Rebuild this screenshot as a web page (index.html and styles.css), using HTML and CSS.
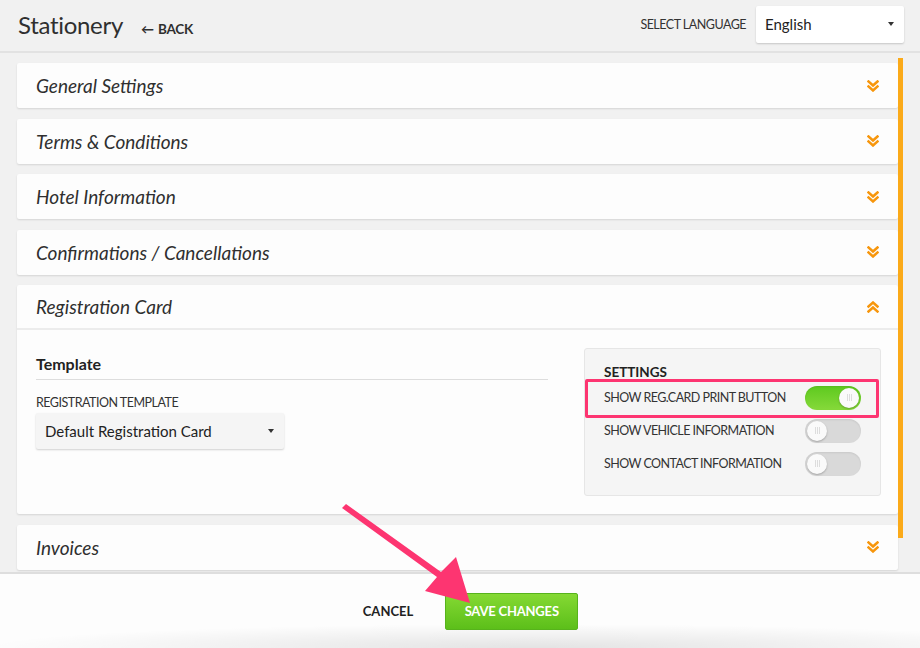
FILE: index.html
```html
<!DOCTYPE html>
<html>
<head>
<meta charset="utf-8">
<link rel="stylesheet" href="styles.css">
</head>
<body>
<div class="page">
  <header class="topbar">
    <div class="title-group">
      <h1 class="title">Stationery</h1>
      <a class="back"><span class="back-arrow">&#8592;</span> BACK</a>
    </div>
    <div class="lang">
      <span class="lang-label">SELECT LANGUAGE</span>
      <div class="select lang-select"><span>English</span><span class="caret"></span></div>
    </div>
  </header>

  <main class="content">
    <div class="panels">
      <section class="panel"><div class="panel-head"><span>General Settings</span><svg class="chev" viewBox="0 0 12 12"><path d="M1.5 1.5 L6 5.5 L10.5 1.5 M1.5 6.5 L6 10.5 L10.5 6.5"/></svg></div></section>
      <section class="panel"><div class="panel-head"><span>Terms &amp; Conditions</span><svg class="chev" viewBox="0 0 12 12"><path d="M1.5 1.5 L6 5.5 L10.5 1.5 M1.5 6.5 L6 10.5 L10.5 6.5"/></svg></div></section>
      <section class="panel"><div class="panel-head"><span>Hotel Information</span><svg class="chev" viewBox="0 0 12 12"><path d="M1.5 1.5 L6 5.5 L10.5 1.5 M1.5 6.5 L6 10.5 L10.5 6.5"/></svg></div></section>
      <section class="panel"><div class="panel-head"><span>Confirmations / Cancellations</span><svg class="chev" viewBox="0 0 12 12"><path d="M1.5 1.5 L6 5.5 L10.5 1.5 M1.5 6.5 L6 10.5 L10.5 6.5"/></svg></div></section>
      <section class="panel open">
        <div class="panel-head"><span>Registration Card</span><svg class="chev" viewBox="0 0 12 12"><path d="M1.5 5.5 L6 1.5 L10.5 5.5 M1.5 10.5 L6 6.5 L10.5 10.5"/></svg></div>
        <div class="panel-body">
          <div class="template-col">
            <h2 class="section-title">Template</h2>
            <label class="field-label">REGISTRATION TEMPLATE</label>
            <div class="select tpl-select"><span>Default Registration Card</span><span class="caret"></span></div>
          </div>
          <div class="settings-box">
            <h3 class="settings-title">SETTINGS</h3>
            <div class="setting-row highlighted">
              <span>SHOW REG.CARD PRINT BUTTON</span>
              <span class="toggle on"><span class="knob"><i></i></span></span>
            </div>
            <div class="setting-row">
              <span>SHOW VEHICLE INFORMATION</span>
              <span class="toggle"><span class="knob"><i></i></span></span>
            </div>
            <div class="setting-row">
              <span>SHOW CONTACT INFORMATION</span>
              <span class="toggle"><span class="knob"><i></i></span></span>
            </div>
          </div>
        </div>
      </section>
      <section class="panel"><div class="panel-head"><span>Invoices</span><svg class="chev" viewBox="0 0 12 12"><path d="M1.5 1.5 L6 5.5 L10.5 1.5 M1.5 6.5 L6 10.5 L10.5 6.5"/></svg></div></section>
    </div>
    <div class="scrollbar"></div>
  </main>

  <footer class="footer">
    <button class="btn-cancel">CANCEL</button>
    <button class="btn-save">SAVE CHANGES</button>
  </footer>

  <svg class="annot-arrow" viewBox="0 0 920 648" width="920" height="648">
    <path d="M342 508 L346 504 L441 572 L456 557 L470 603 L425 591 L437 577 Z" fill="#fd3571"/>
  </svg>
</div>
</body>
</html>
```
FILE: styles.css
```css
* { box-sizing: border-box; }
html, body { margin: 0; padding: 0; }
body {
  font-family: "Lato", "Open Sans", sans-serif;
  color: #333;
  background: #f1f1f1;
}
.page {
  position: relative;
  width: 920px;
  height: 648px;
  overflow: hidden;
  display: flex;
  flex-direction: column;
  background: #f1f1f1;
}
.topbar {
  height: 53px;
  flex: none;
  display: flex;
  align-items: center;
  justify-content: space-between;
  padding: 0 16px 2px 18px;
  border-bottom: 2px solid #e2e2e2;
}
.title-group { display: flex; align-items: baseline; gap: 18px; }
.title {
  margin: 0;
  font-size: 24px;
  font-weight: 400;
  color: #2f2f2f;
  letter-spacing: -0.3px;
}
.back {
  font-size: 13.5px;
  font-weight: 700;
  color: #2f2f2f;
  letter-spacing: -0.2px;
}
.back-arrow { font-size: 13px; margin-right: 1px; }
.lang { display: flex; align-items: center; gap: 10px; }
.lang-label { font-size: 12.5px; color: #333; letter-spacing: -0.5px; }
.select {
  display: flex;
  align-items: center;
  justify-content: space-between;
  background: #fff;
  box-shadow: 0 1px 2px rgba(0,0,0,0.18);
  border-radius: 2px;
  font-size: 15px;
  color: #222;
}
.lang-select { width: 148px; height: 37px; padding: 0 10px 2px 9px; }
.caret {
  width: 0; height: 0;
  border-left: 3px solid transparent;
  border-right: 3px solid transparent;
  border-top: 4px solid #333;
}
.content {
  flex: 1;
  display: flex;
  padding: 10px 16px 0 17px;
  min-height: 0;
  overflow: hidden;
}
.panels { width: 881px; display: flex; flex-direction: column; gap: 10.5px; }
.scrollbar {
  width: 5px;
  height: 480px;
  background: #fbaa19;
  margin-top: -5px;
}
.panel {
  background: #fdfdfd;
  box-shadow: 0 1px 2px rgba(0,0,0,0.12);
  border-radius: 2px;
}
.panel-head {
  height: 45px;
  display: flex;
  align-items: center;
  justify-content: space-between;
  padding: 0 19px 0 19px;
  font-size: 19px;
  font-style: italic;
  color: #2f2f2f;
}
.chev { width: 12px; height: 12px; fill: none; stroke: #f7960c; stroke-width: 2.5; stroke-linecap: square; }
.open .panel-head { border-bottom: 2px solid #ececec; }
.panel-body {
  display: flex;
  justify-content: space-between;
  padding: 18px 17px 17px 19px;
  height: 184px;
}
.template-col { width: 512px; }
.section-title {
  margin: 6px 0 0 0;
  font-size: 16px;
  font-weight: 700;
  color: #222;
  padding-bottom: 6px;
  border-bottom: 1px solid #ddd;
}
.field-label { display: block; margin-top: 15px; font-size: 12.5px; color: #333; letter-spacing: -0.5px; }
.tpl-select {
  width: 248px; height: 36px; margin-top: 3px;
  padding: 0 10px 0 9px;
  background: #f5f5f5;
  font-size: 15px;
}
.settings-box {
  width: 297px;
  height: 148px;
  background: #f5f5f5;
  border: 1px solid #e6e6e6;
  border-radius: 3px;
  padding: 15px 19px 0 19px;
}
.settings-title { margin: 0 0 1px 0; font-size: 13.5px; font-weight: 700; color: #222; }
.setting-row {
  position: relative;
  height: 33px;
  display: flex;
  align-items: center;
  justify-content: space-between;
  font-size: 12.5px;
  letter-spacing: -0.55px;
  color: #333;
}
.highlighted::after {
  content: "";
  position: absolute;
  left: -19px; right: -18px; top: -2px; bottom: -4px;
  border: 3px solid #fd3571;
  border-radius: 2px;
}
.toggle {
  width: 56px; height: 24px;
  border-radius: 12px;
  background: #d9d9d9;
  position: relative;
  box-shadow: inset 0 1px 2px rgba(0,0,0,0.08);
}
.toggle.on { background: linear-gradient(#5ec91f, #86d93a); }
.knob {
  position: absolute;
  top: 2px; left: 2px;
  width: 20px; height: 20px;
  border-radius: 50%;
  background: #fafafa;
  box-shadow: 0 1px 2px rgba(0,0,0,0.25);
  display: flex; align-items: center; justify-content: center;
}
.toggle.on .knob { left: 34px; }
.knob i {
  width: 5px; height: 7px;
  border-left: 1px solid #ddd; border-right: 1px solid #ddd;
  position: relative;
}
.knob i::after { content: ""; position: absolute; left: 1px; top: 0; width: 1px; height: 7px; background: #ddd; }
.footer {
  flex: none;
  height: 76px;
  background:
    radial-gradient(ellipse 60% 24px at 58% 100%, rgba(0,0,0,0.10), rgba(0,0,0,0) 100%),
    #fdfdfd;
  border-top: 2px solid #dedede;
  display: flex;
  align-items: center;
  justify-content: center;
  gap: 26px;
  padding-left: 15px;
}
.btn-cancel {
  background: none; border: 0;
  font-family: inherit;
  font-size: 13px;
  font-weight: 700;
  color: #222;
}
.btn-save {
  width: 133px; height: 37px;
  border: 1px solid #57b31c;
  border-radius: 2px;
  background: linear-gradient(#85d933, #5cbf1a);
  color: #fff;
  font-family: inherit;
  font-size: 13px;
  font-weight: 700;
  letter-spacing: -0.2px;
}
.annot-arrow { position: absolute; left: 0; top: 0; pointer-events: none; }
```
